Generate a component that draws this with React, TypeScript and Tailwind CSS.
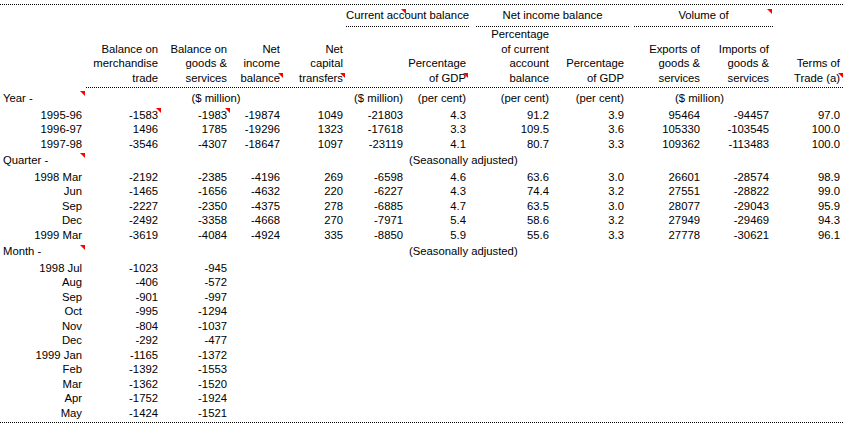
import React from "react";

const G = "grid grid-cols-[86px_75px_69px_53px_63px_60px_63px_83px_75px_76px_69px_71px]";

const Tri = ({ className = "" }: { className?: string }) => (
  <span
    className={`absolute w-0 h-0 border-t-[5px] border-l-[5px] border-t-[#ff0000] border-l-transparent ${className}`}
  />
);

const headers: { lines: string[]; tri?: string }[] = [
  { lines: [] },
  { lines: ["Balance on", "merchandise", "trade"] },
  { lines: ["Balance on", "goods &", "services"] },
  { lines: ["Net", "income", "balance"], tri: "right-0" },
  { lines: ["Net", "capital", "transfers"], tri: "right-[1px]" },
  { lines: [] },
  { lines: ["Percentage", "of GDP"], tri: "right-[1px]" },
  { lines: ["Percentage", "of current", "account", "balance"] },
  { lines: ["Percentage", "of GDP"] },
  { lines: ["Exports of", "goods &", "services"] },
  { lines: ["Imports of", "goods &", "services"] },
  { lines: ["Terms of", "Trade (a)"], tri: "right-0" },
];

const years = [
  ["1995-96", "-1583", "-1983", "-19874", "1049", "-21803", "4.3", "91.2", "3.9", "95464", "-94457", "97.0"],
  ["1996-97", "1496", "1785", "-19296", "1323", "-17618", "3.3", "109.5", "3.6", "105330", "-103545", "100.0"],
  ["1997-98", "-3546", "-4307", "-18647", "1097", "-23119", "4.1", "80.7", "3.3", "109362", "-113483", "100.0"],
];

const quarters = [
  ["1998 Mar", "-2192", "-2385", "-4196", "269", "-6598", "4.6", "63.6", "3.0", "26601", "-28574", "98.9"],
  ["Jun", "-1465", "-1656", "-4632", "220", "-6227", "4.3", "74.4", "3.2", "27551", "-28822", "99.0"],
  ["Sep", "-2227", "-2350", "-4375", "278", "-6885", "4.7", "63.5", "3.0", "28077", "-29043", "95.9"],
  ["Dec", "-2492", "-3358", "-4668", "270", "-7971", "5.4", "58.6", "3.2", "27949", "-29469", "94.3"],
  ["1999 Mar", "-3619", "-4084", "-4924", "335", "-8850", "5.9", "55.6", "3.3", "27778", "-30621", "96.1"],
];

const months = [
  ["1998 Jul", "-1023", "-945"],
  ["Aug", "-406", "-572"],
  ["Sep", "-901", "-997"],
  ["Oct", "-995", "-1294"],
  ["Nov", "-804", "-1037"],
  ["Dec", "-292", "-477"],
  ["1999 Jan", "-1165", "-1372"],
  ["Feb", "-1392", "-1553"],
  ["Mar", "-1362", "-1520"],
  ["Apr", "-1752", "-1924"],
  ["May", "-1424", "-1521"],
];

const DataRow = ({ cells, notes = [] }: { cells: string[]; notes?: number[] }) => (
  <div className={`${G} h-[14.5px]`}>
    {cells.map((c, i) => (
      <div key={i} className={`relative text-right whitespace-nowrap ${i === 0 ? "pr-[4px]" : "pr-[3px]"}`}>
        {c}
        {notes.includes(i) && <Tri className="right-0 top-0" />}
      </div>
    ))}
  </div>
);

const Section = ({ label, triTop }: { label: string; triTop: string }) => (
  <div className={`${G} h-[18.5px] items-center`}>
    <div className="relative h-full flex items-center pl-[3px] whitespace-nowrap">
      {label}
      <Tri className={`right-[1px] ${triTop}`} />
    </div>
    <div className="col-start-7 col-span-3 pl-[3px] whitespace-nowrap">(Seasonally adjusted)</div>
  </div>
);

export default function App() {
  return (
    <div className="w-[843px] h-[426px] overflow-hidden bg-white text-black text-[11.3px] leading-[14.5px] font-['Liberation_Sans',Arial,sans-serif] pt-[4px]">
      <div className="border-t border-dotted border-black">
        {/* group headings */}
        <div className={`${G} h-[22px]`}>
          <div className="col-start-6 col-span-2 relative border-b border-dotted border-black pt-[3px] text-center whitespace-nowrap">
            Current account balance
            <Tri className="left-[55px] top-[4px]" />
          </div>
          <div className="col-span-2 ml-[7px] mr-[-2px] border-b border-dotted border-black pt-[3px] text-center whitespace-nowrap">
            Net income balance
          </div>
          <div className="col-span-2 relative ml-[7px] mr-[-1px] border-b border-dotted border-black pt-[3px] text-center whitespace-nowrap">
            Volume of
            <Tri className="right-[1px] top-[4px]" />
          </div>
        </div>

        {/* column headings */}
        <div className={`${G} h-[60px]`}>
          {headers.map((h, i) => (
            <div key={i} className="flex flex-col justify-end pb-[2px]">
              {h.lines.map((l, j) => (
                <div key={j} className="relative h-[14.5px] text-right pr-[3px] whitespace-nowrap">
                  {l}
                  {h.tri && j === h.lines.length - 1 && <Tri className={`${h.tri} top-[2.5px]`} />}
                </div>
              ))}
            </div>
          ))}
        </div>
        <div className="ml-[86px] border-t border-dotted border-black" />

        {/* units row */}
        <div className={`${G} h-[19.5px] items-center`}>
          <div className="relative h-full flex items-center pl-[3px]">
            Year -
            <Tri className="right-[1px] top-[3px]" />
          </div>
          <div className="col-span-4 text-center whitespace-nowrap">($ million)</div>
          <div className="text-right pr-[3px] whitespace-nowrap">($ million)</div>
          <div className="text-right pr-[3px] whitespace-nowrap">(per cent)</div>
          <div className="text-right pr-[3px] whitespace-nowrap">(per cent)</div>
          <div className="text-right pr-[3px] whitespace-nowrap">(per cent)</div>
          <div className="col-span-2 text-center whitespace-nowrap">($ million)</div>
        </div>
        {years.map((r, i) => (
          <DataRow key={i} cells={r} notes={i === 0 ? [1, 2] : []} />
        ))}

        <Section label="Quarter -" triTop="top-[2px]" />
        {quarters.map((r, i) => (
          <DataRow key={i} cells={r} />
        ))}

        <Section label="Month -" triTop="top-[3px]" />
        {months.map((r, i) => (
          <DataRow key={i} cells={r} />
        ))}

        <div className="mt-[2px] border-t border-dotted border-black" />
      </div>
    </div>
  );
}
